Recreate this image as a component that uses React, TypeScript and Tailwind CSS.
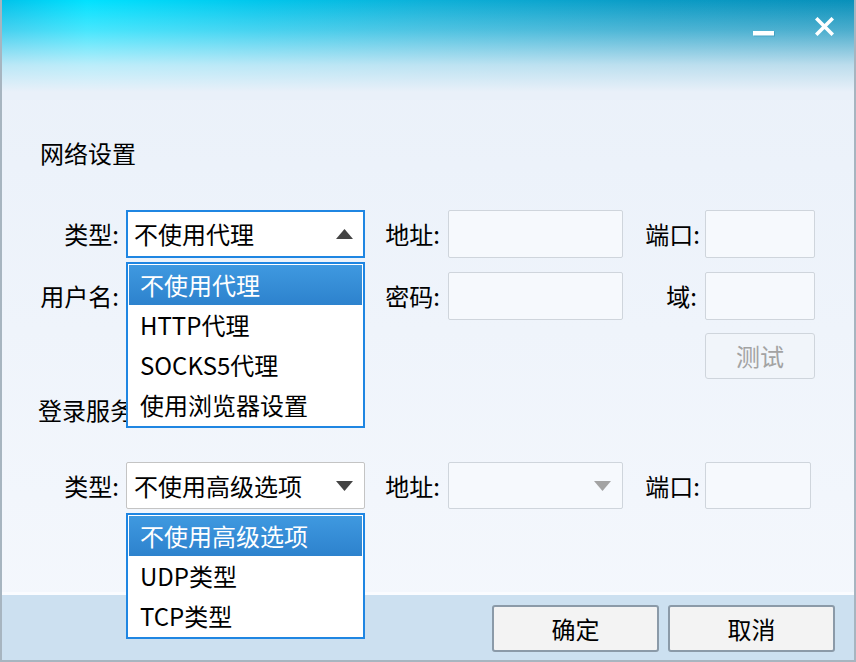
import { ReactNode } from 'react';

function Arrow({ dir, color }: { dir: 'up' | 'down'; color: string }) {
  return (
    <svg width="17" height="10" viewBox="0 0 17 10" className="shrink-0">
      {dir === 'up' ? (
        <polygon points="8.5,0 17,10 0,10" fill={color} />
      ) : (
        <polygon points="0,0 17,0 8.5,10" fill={color} />
      )}
    </svg>
  );
}

function Input({ w, h = 'h-[48px]' }: { w: string; h?: string }) {
  return <div className={`${w} ${h} border border-[#cfd5dc] rounded-[2px] bg-[#f6f9fd]`} />;
}

function DropList({ items }: { items: string[] }) {
  return (
    <div className="absolute left-0 top-full mt-[4px] z-10 w-full border-2 border-[#1f86e2] bg-white p-[1px]">
      {items.map((t, i) => (
        <div
          key={t}
          className={`h-[40px] flex items-center pl-[11px] ${
            i === 0 ? 'bg-[linear-gradient(to_bottom,#3f99e0,#2d82cd)] text-white' : 'text-black'
          }`}
        >
          {t}
        </div>
      ))}
    </div>
  );
}

function Label({ w, pr, children }: { w: string; pr: string; children: ReactNode }) {
  return <span className={`${w} ${pr} text-right shrink-0`}>{children}</span>;
}

export default function App() {
  return (
    <div className="w-[856px] h-[662px] flex flex-col border-l-2 border-r-2 border-b-2 border-[#a7b5c0] bg-[linear-gradient(to_bottom,#e9f0f9,#f5f8fd)] font-['Noto_Sans_CJK_SC','Noto_Sans',sans-serif] text-[24px] leading-[32px] text-black overflow-hidden">
      {/* title bar */}
      <div className="h-[100px] shrink-0 flex justify-end items-start bg-[linear-gradient(to_bottom,rgba(233,240,249,0)_0%,rgba(233,240,249,0.3)_30%,rgba(233,240,249,0.8)_65%,#e9f0f9_92%),linear-gradient(to_right,#00c2ea,#00e2ff_10%,#00c6ec_30%,#0cb0d8_50%,#0a9cc6_75%,#0890ba)]">
        <div className="flex items-start gap-[40px] pr-[20px] pt-[17px]">
          <svg width="22" height="20" viewBox="0 0 22 20">
            <rect x="1" y="14.5" width="21" height="5" fill="#1b7fa6" opacity="0.35" />
            <rect x="0" y="14" width="21" height="4.5" fill="#ffffff" />
          </svg>
          <svg width="19" height="19" viewBox="0 0 19 19">
            <path d="M2.5 2.5 L16.5 16.5 M16.5 2.5 L2.5 16.5" stroke="#ffffff" strokeWidth="3.6" strokeLinecap="square" />
          </svg>
        </div>
      </div>

      {/* content */}
      <div className="flex-1 flex flex-col">
        <div className="mt-[37px] pl-[38px]">网络设置</div>

        <div className="mt-[41px] flex items-center h-[48px]">
          <Label w="w-[117px]" pr="pr-0">类型:</Label>
          <div className="relative ml-[7px] w-[239px] h-[48px]">
            <div className="h-full border-2 border-[#1f86e2] bg-white flex items-center justify-between pl-[6px] pr-[10px]">
              <span>不使用代理</span>
              <Arrow dir="up" color="#444444" />
            </div>
            <DropList items={['不使用代理', 'HTTP代理', 'SOCKS5代理', '使用浏览器设置']} />
          </div>
          <Label w="w-[83px]" pr="pr-[8px]">地址:</Label>
          <Input w="w-[175px]" />
          <Label w="w-[82px]" pr="pr-[5px]">端口:</Label>
          <Input w="w-[110px]" />
        </div>

        <div className="mt-[14px] flex items-center h-[48px]">
          <Label w="w-[117px]" pr="pr-0">用户名:</Label>
          <div className="ml-[7px]">
            <Input w="w-[239px]" />
          </div>
          <Label w="w-[83px]" pr="pr-[8px]">密码:</Label>
          <Input w="w-[175px]" />
          <Label w="w-[82px]" pr="pr-[8px]">域:</Label>
          <Input w="w-[110px]" />
        </div>

        <div className="mt-[13px] flex">
          <div className="ml-[703px] w-[110px] h-[46px] border border-[#cfd5dc] rounded-[3px] bg-[#f1f5fa] flex items-center justify-center text-[#a3a3a3]">
            测试
          </div>
        </div>

        <div className="mt-[15px] ml-[36px] w-[88px] overflow-hidden whitespace-nowrap">登录服务器设置</div>

        <div className="mt-[36px] flex items-center h-[47px]">
          <Label w="w-[117px]" pr="pr-0">类型:</Label>
          <div className="relative ml-[7px] w-[239px] h-[47px]">
            <div className="h-full border border-[#c4c4c4] rounded-[2px] bg-white flex items-center justify-between pl-[7px] pr-[11px]">
              <span>不使用高级选项</span>
              <Arrow dir="down" color="#444444" />
            </div>
            <DropList items={['不使用高级选项', 'UDP类型', 'TCP类型']} />
          </div>
          <Label w="w-[83px]" pr="pr-[8px]">地址:</Label>
          <div className="w-[175px] h-[47px] border border-[#cfd5dc] rounded-[2px] bg-[#f6f9fd] flex items-center justify-end pr-[11px]">
            <Arrow dir="down" color="#a3a3a3" />
          </div>
          <Label w="w-[82px]" pr="pr-[5px]">端口:</Label>
          <Input w="w-[106px]" h="h-[47px]" />
        </div>
      </div>

      {/* footer */}
      <div className="h-[68px] shrink-0 border-t-[3px] border-[#fafcff] bg-[#cce0f0] flex justify-end items-start gap-[9px] pt-[10px] pr-[19px]">
        <div className="w-[167px] h-[47px] border-2 border-[#8b9aa8] rounded-[3px] bg-[#f3f3f3] flex items-center justify-center">
          确定
        </div>
        <div className="w-[167px] h-[47px] border-2 border-[#8b9aa8] rounded-[3px] bg-[#f3f3f3] flex items-center justify-center">
          取消
        </div>
      </div>
    </div>
  );
}
